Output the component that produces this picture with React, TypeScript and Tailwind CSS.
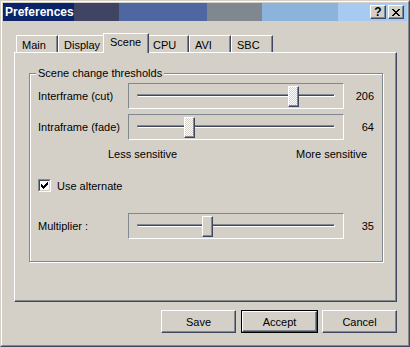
import React from "react";

type TabDef = { label: string; w: string; selected?: boolean };

const tabs: TabDef[] = [
  { label: "Main", w: "w-[42px]" },
  { label: "Display", w: "w-[47px]" },
  { label: "Scene", w: "w-[46px]", selected: true },
  { label: "CPU", w: "w-[42px]" },
  { label: "AVI", w: "w-[42px]" },
  { label: "SBC", w: "w-[42px]" },
];

const checkPx: [number, number][] = [
  [6, 0], [5, 1], [6, 1], [0, 2], [4, 2], [5, 2], [6, 2],
  [0, 3], [1, 3], [3, 3], [4, 3], [5, 3],
  [0, 4], [1, 4], [2, 4], [3, 4], [4, 4],
  [1, 5], [2, 5], [3, 5], [2, 6],
];

const closePx: [number, number][] = [
  [0, 0], [1, 0], [6, 0], [7, 0],
  [1, 1], [2, 1], [5, 1], [6, 1],
  [2, 2], [3, 2], [4, 2], [5, 2],
  [3, 3], [4, 3],
  [2, 4], [3, 4], [4, 4], [5, 4],
  [1, 5], [2, 5], [5, 5], [6, 5],
  [0, 6], [1, 6], [6, 6], [7, 6],
];

function PixelGlyph({ px, w, h }: { px: [number, number][]; w: number; h: number }) {
  return (
    <svg width={w} height={h} shapeRendering="crispEdges" className="block">
      {px.map(([x, y]) => (
        <rect key={`${x}-${y}`} x={x} y={y} width="1" height="1" fill="#000" />
      ))}
    </svg>
  );
}

function Thumb({ left, dither, id }: { left: number; dither?: boolean; id: string }) {
  return (
    <div
      className="absolute top-[2px] w-[11px] h-[21px] border border-t-white border-l-white border-r-[#404860] border-b-[#404860] bg-[#d4d0c8] shadow-[inset_-1px_-1px_0_#808890]"
      style={{ left }}
    >
      {dither && (
        <svg width="8" height="18" shapeRendering="crispEdges" className="block">
          <defs>
            <pattern id={id} width="2" height="2" patternUnits="userSpaceOnUse">
              <rect width="2" height="2" fill="#d4d0c8" />
              <rect width="1" height="1" fill="#ffffff" />
              <rect x="1" y="1" width="1" height="1" fill="#ffffff" />
            </pattern>
          </defs>
          <rect width="8" height="18" fill={`url(#${id})`} />
        </svg>
      )}
    </div>
  );
}

function Slider({ left, dither, id }: { left: number; dither?: boolean; id: string }) {
  return (
    <div className="relative w-[216px] h-[26px] border border-t-[#808890] border-l-[#808890] border-r-white border-b-white">
      <div className="ml-[8px] mt-[10px] w-[198px] h-[3px] border border-t-[#808890] border-l-[#808890] border-r-white border-b-white bg-[#404860]" />
      <Thumb left={left} dither={dither} id={id} />
    </div>
  );
}

function SliderRow({ label, value, left, dither, id, className }: { label: string; value: string; left: number; dither?: boolean; id: string; className?: string }) {
  return (
    <div className={`flex items-center h-[26px] ${className ?? ""}`}>
      <div className="w-[90px] leading-[14px]">{label}</div>
      <Slider left={left} dither={dither} id={id} />
      <div className="w-[30px] text-right leading-[14px]">{value}</div>
    </div>
  );
}

function Button({ label, def }: { label: string; def?: boolean }) {
  const inner = (
    <div className="w-full h-full flex items-center justify-center border border-t-white border-l-white border-r-[#404860] border-b-[#404860] shadow-[inset_-1px_-1px_0_#808890] leading-[14px]">
      {label}
    </div>
  );
  if (def) {
    return <div className="w-[77px] h-[23px] border border-black">{inner}</div>;
  }
  return <div className="w-[75px] h-[23px]">{inner}</div>;
}

function CaptionButton({ children }: { children: React.ReactNode }) {
  return (
    <div className="w-[16px] h-[14px] bg-[#d4d0c8] border border-t-white border-l-white border-r-[#404860] border-b-[#404860] shadow-[inset_-1px_-1px_0_#808890] flex items-center justify-center">
      {children}
    </div>
  );
}

export default function App() {
  return (
    <div className="w-[410px] h-[347px] bg-[#d4d0c8] border border-t-[#d4d0c8] border-l-[#d4d0c8] border-r-[#404860] border-b-[#404860] font-['Liberation_Sans',Arial,sans-serif] text-[11px] text-black select-none">
      <div className="h-full border border-t-white border-l-white border-r-[#808890] border-b-[#808890] p-px flex flex-col">
        {/* Title bar */}
        <div className="h-[18px] flex items-center bg-[linear-gradient(90deg,#0a246a_0px_71px,#3e4462_71px_116px,#4e67a1_116px_204px,#7f878f_204px_259px,#8bb3dc_259px_335px,#a6caf0_335px_404px)]">
          <div className="pl-[2px] text-white font-bold text-[12px] leading-[18px] flex-1">Preferences</div>
          <div className="flex items-center pr-[3px]">
            <CaptionButton>
              <span className="font-bold text-[12px] leading-[12px] text-black">?</span>
            </CaptionButton>
            <div className="w-[2px]" />
            <CaptionButton>
              <PixelGlyph px={closePx} w={8} h={7} />
            </CaptionButton>
          </div>
        </div>

        {/* Body */}
        <div className="pl-[11px] pr-[10px] pt-[12px] flex flex-col">
          {/* Tabs */}
          <div className="h-[19px] flex items-end pl-[2px]">
            {tabs.map((t) =>
              t.selected ? (
                <div
                  key={t.label}
                  className={`relative z-10 -mx-[2px] -mb-px ${t.w} h-[20px] bg-[#d4d0c8] border-t border-l border-r border-t-white border-l-white border-r-[#404860] shadow-[inset_-1px_0_0_#808890] pl-[6px] pt-[1px] leading-[14px]`}
                >
                  {t.label}
                </div>
              ) : (
                <div
                  key={t.label}
                  className={`${t.w} h-[17px] border-t border-l border-r border-t-white border-l-white border-r-[#404860] shadow-[inset_-1px_0_0_#808890] pl-[5px] pt-[2px] leading-[14px]`}
                >
                  {t.label}
                </div>
              )
            )}
          </div>

          {/* Panel */}
          <div className="h-[250px] border border-t-white border-l-white border-r-[#404860] border-b-[#404860] shadow-[inset_-1px_-1px_0_#808890] pt-[13px] pl-[14px] pr-[13px]">
            <fieldset className="border border-[#808890] shadow-[inset_1px_1px_0_#ffffff,1px_1px_0_#ffffff] pl-[8px] pt-[2px] pb-[22px]">
              <legend className="-ml-[2px] px-[2px] leading-[15px] bg-[#d4d0c8]">Scene change thresholds</legend>
              <SliderRow label="Interframe (cut)" value="206" left={159} dither id="p1" />
              <SliderRow label="Intraframe (fade)" value="64" left={55} dither id="p2" className="mt-[5px]" />
              <div className="mt-[7px] h-[14px] ml-[70px] w-[259px] flex justify-between leading-[14px]">
                <span>Less sensitive</span>
                <span>More sensitive</span>
              </div>
              <div className="mt-[18px] h-[13px] flex items-center gap-[6px]">
                <div className="w-[13px] h-[13px] border border-t-[#808890] border-l-[#808890] border-r-white border-b-white">
                  <div className="w-full h-full bg-white border border-t-[#404860] border-l-[#404860] border-r-[#d4d0c8] border-b-[#d4d0c8] flex items-center justify-center">
                    <PixelGlyph px={checkPx} w={7} h={7} />
                  </div>
                </div>
                <span className="leading-[14px]">Use alternate</span>
              </div>
              <SliderRow label="Multiplier :" value="35" left={73} id="p3" className="mt-[21px]" />
            </fieldset>
          </div>

          {/* Buttons */}
          <div className="mt-[8px] flex justify-end">
            <Button label="Save" />
            <div className="w-[5px]" />
            <Button label="Accept" def />
            <div className="w-[4px]" />
            <Button label="Cancel" />
          </div>
        </div>
      </div>
    </div>
  );
}
